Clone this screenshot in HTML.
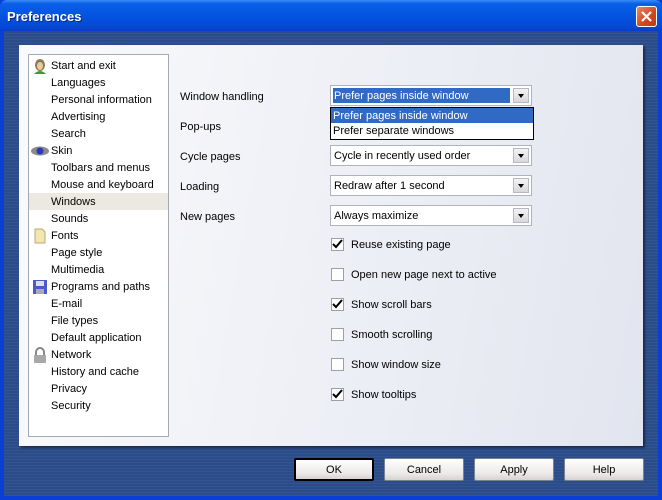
<!DOCTYPE html>
<html><head><style>
*{margin:0;padding:0;box-sizing:border-box}
body{width:662px;height:500px;overflow:hidden;font-family:Tahoma,"Liberation Sans",sans-serif;font-size:11px;color:#000;position:relative;background:#0b3ed6}
.title{position:absolute;left:0;top:0;width:662px;height:31px;background:linear-gradient(#3a8cf6 0%,#0a5fe8 12%,#0454e0 50%,#0548d6 85%,#063ec8 100%);border-radius:7px 7px 0 0}
.title span{position:absolute;left:7px;top:9px;color:#fff;font-weight:bold;font-size:13px;text-shadow:1px 1px #0b2a80}
.close{position:absolute;left:636px;top:6px;width:21px;height:21px;border:1px solid #fff;border-radius:3px;background:linear-gradient(135deg,#e8866a,#d2461e 60%,#c03a14)}
.frame{position:absolute;left:4px;top:31px;width:654px;height:465px;background:repeating-linear-gradient(#2b4c88 0 2px,#32558f 2px 3px)}
.panel{position:absolute;left:19px;top:45px;width:624px;height:401px;background:linear-gradient(100deg,#fafafc,#eceef5 60%,#e2e5ef);box-shadow:2px 2px 2px rgba(0,0,0,.45)}
.list{position:absolute;left:28px;top:54px;width:141px;height:383px;background:#fff;border:1px solid #a5a9b2}
.it{position:absolute;left:22px;height:17px;line-height:17px;white-space:nowrap;margin-top:2px}
.sel{position:absolute;left:0;top:138px;width:139px;height:17px;background:#ebe9e1}
.ic{position:absolute;left:3px;width:16px;height:16px;margin-top:1px}
.lbl{position:absolute;left:180px;margin-top:1px}
.combo{position:absolute;left:330px;width:202px;height:21px;background:#fff;border:1px solid #aeb3bd;padding:4px 0 0 3px}
.arr{position:absolute;right:2px;top:2px;width:16px;height:15px;background:linear-gradient(#f3f3f3,#d8d8dc);border:1px solid #b6b9c3}
.arr:after{content:"";position:absolute;left:4px;top:5px;border:3px solid transparent;border-top:4px solid #000;border-bottom:0}
.cb{position:absolute;left:331px;width:13px;height:13px;border:1px solid #9aa0ab;background:#fff}
.cbl{position:absolute;left:351px}
.btn{position:absolute;top:458px;width:80px;height:23px;background:linear-gradient(#fff,#ece9e8 70%,#d6d2d2);border:1px solid #7a8290;border-radius:2px;text-align:center;line-height:23px}
</style></head><body>
<div class="title"><span>Preferences</span></div>
<div class="close"><svg width="19" height="19" viewBox="0 0 19 19"><path d="M5 5L14 14M14 5L5 14" stroke="#fff" stroke-width="2.2"/></svg></div>
<div class="frame"></div>
<div class="panel"></div>
<div class="list">
<div class="sel"></div>
<svg class="ic" style="top:2px" viewBox="0 0 16 16"><ellipse cx="8" cy="7" rx="5" ry="6" fill="#8a7a5a"/><ellipse cx="8" cy="8" rx="3" ry="4" fill="#e8c9a0"/><path d="M2 16Q8 10 14 16Z" fill="#3a9a3a"/></svg>
<div class="it" style="top:1px">Start and exit</div>
<div class="it" style="top:18px">Languages</div>
<div class="it" style="top:35px">Personal information</div>
<div class="it" style="top:52px">Advertising</div>
<div class="it" style="top:69px">Search</div>
<svg class="ic" style="top:87px;left:1px;width:20px" viewBox="0 0 20 16"><ellipse cx="10" cy="8" rx="9" ry="4.5" fill="#8a8a8a"/><circle cx="10" cy="8" r="3.5" fill="#2a3ab8"/></svg>
<div class="it" style="top:86px">Skin</div>
<div class="it" style="top:103px">Toolbars and menus</div>
<div class="it" style="top:120px">Mouse and keyboard</div>
<div class="it" style="top:137px">Windows</div>
<div class="it" style="top:154px">Sounds</div>
<svg class="ic" style="top:172px" viewBox="0 0 16 16"><path d="M3 1H10L13 4V15H3Z" fill="#f4e6b0" stroke="#b8a870"/></svg>
<div class="it" style="top:171px">Fonts</div>
<div class="it" style="top:188px">Page style</div>
<div class="it" style="top:205px">Multimedia</div>
<svg class="ic" style="top:223px" viewBox="0 0 16 16"><rect x="1" y="1" width="14" height="14" fill="#4a5ac8"/><rect x="4" y="2" width="8" height="5" fill="#dde"/><rect x="4" y="10" width="8" height="5" fill="#aab"/></svg>
<div class="it" style="top:222px">Programs and paths</div>
<div class="it" style="top:239px">E-mail</div>
<div class="it" style="top:256px">File types</div>
<div class="it" style="top:273px">Default application</div>
<svg class="ic" style="top:291px" viewBox="0 0 16 16"><path d="M4 8V5a4 4 0 0 1 8 0v3" stroke="#888" stroke-width="2" fill="none"/><rect x="2" y="8" width="12" height="8" fill="#a8a8a8"/></svg>
<div class="it" style="top:290px">Network</div>
<div class="it" style="top:307px">History and cache</div>
<div class="it" style="top:324px">Privacy</div>
<div class="it" style="top:341px">Security</div>
</div>
<div class="lbl" style="top:90px">Window handling</div>
<div class="lbl" style="top:120px">Pop-ups</div>
<div class="lbl" style="top:150px">Cycle pages</div>
<div class="lbl" style="top:180px">Loading</div>
<div class="lbl" style="top:210px">New pages</div>
<div class="combo" style="top:85px"><span style="background:#316ac5;color:#fff;position:absolute;left:2px;top:2px;width:177px;height:15px;padding:2px 0 0 1px;line-height:13px">Prefer pages inside window</span><div class="arr"></div></div>
<div style="position:absolute;left:330px;top:107px;width:204px;height:33px;background:#fff;border:1px solid #000">
<div style="background:#316ac5;color:#fff;height:15px;padding-left:2px;line-height:16px">Prefer pages inside window</div>
<div style="padding-left:2px;line-height:16px">Prefer separate windows</div></div>
<div class="combo" style="top:145px">Cycle in recently used order<div class="arr"></div></div>
<div class="combo" style="top:175px">Redraw after 1 second<div class="arr"></div></div>
<div class="combo" style="top:205px">Always maximize<div class="arr"></div></div>
<div class="cb" style="top:238px"><svg width="11" height="11"><path d="M1 5L4 8L10 1" stroke="#000" stroke-width="2" fill="none"/></svg></div><div class="cbl" style="top:239px">Reuse existing page</div>
<div class="cb" style="top:268px"></div><div class="cbl" style="top:269px">Open new page next to active</div>
<div class="cb" style="top:298px"><svg width="11" height="11"><path d="M1 5L4 8L10 1" stroke="#000" stroke-width="2" fill="none"/></svg></div><div class="cbl" style="top:299px">Show scroll bars</div>
<div class="cb" style="top:328px"></div><div class="cbl" style="top:329px">Smooth scrolling</div>
<div class="cb" style="top:358px"></div><div class="cbl" style="top:359px">Show window size</div>
<div class="cb" style="top:388px"><svg width="11" height="11"><path d="M1 5L4 8L10 1" stroke="#000" stroke-width="2" fill="none"/></svg></div><div class="cbl" style="top:389px">Show tooltips</div>
<div class="btn" style="left:294px;border:2px solid #000;line-height:21px">OK</div>
<div class="btn" style="left:384px">Cancel</div>
<div class="btn" style="left:474px">Apply</div>
<div class="btn" style="left:564px">Help</div>
</body></html>
